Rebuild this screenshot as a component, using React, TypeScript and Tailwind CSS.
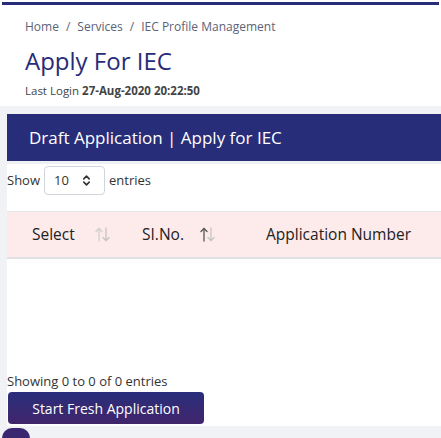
import { ChevronsUpDown } from "lucide-react";

function SortIcon({ active }: { active?: boolean }) {
  return (
    <svg width="15" height="15" viewBox="0 0 15 15" fill="none" strokeWidth="1.3" strokeLinecap="round" strokeLinejoin="round">
      <g stroke={active ? "#555" : "#d0d0d0"}>
        <path d="M4 14V1.5" />
        <path d="M1 4.5L4 1.5L7 4.5" />
      </g>
      <g stroke="#c4c4c4">
        <path d="M11 1V13.5" />
        <path d="M8 10.5L11 13.5L14 10.5" />
      </g>
    </svg>
  );
}

export default function App() {
  return (
    <div className="w-[441px] h-[438px] overflow-hidden bg-white font-['Open_Sans',sans-serif] relative">
      <div className="mx-[2px] mt-[2px] h-[3px] bg-[#272c78]" />

      <div className="px-[25px] pt-[13px]">
        <div className="text-[12px] text-[#5b6275] flex gap-[7px]">
          <span>Home</span>
          <span>/</span>
          <span>Services</span>
          <span>/</span>
          <span>IEC Profile Management</span>
        </div>
        <h1 className="mt-[10px] text-[24px] leading-[30px] text-[#282c78]">Apply For IEC</h1>
        <div className="mt-[6px] text-[11.5px] text-[#444]">
          Last Login <span className="font-bold">27-Aug-2020 20:22:50</span>
        </div>
      </div>

      <div className="mt-[7px] bg-[#f1f2f6] pl-[7px] pt-[8px] h-[340px]">
        <div className="bg-white">
          <div className="h-[47px] bg-[#282d7a] flex items-center pl-[22px] text-white text-[17px]">
            Draft Application | Apply for IEC
          </div>
          <div className="h-[3px] bg-[#eef0f4]" />
          <div className="flex items-center h-[32px] text-[13px] text-[#333]">
            <span>Show</span>
            <div className="ml-[4px] w-[61px] h-[29px] border border-gray-300 rounded-[4px] flex items-center justify-between pl-[9px] pr-[11px]">
              <span>10</span>
              <ChevronsUpDown size={13} strokeWidth={3} className="text-[#333]" />
            </div>
            <span className="ml-[4px]">entries</span>
          </div>
          <div className="mt-[15px] h-[48px] bg-[#fdeaea] border-t border-gray-200 border-b-2 border-b-[#dfe1e6] flex items-center text-[15.5px] font-medium text-[#222]">
            <div className="w-[110px] pl-[25px] flex items-center gap-[20px]">
              <span>Select</span>
              <SortIcon />
            </div>
            <div className="w-[124px] pl-[25px] flex items-center gap-[16px]">
              <span>SI.No.</span>
              <SortIcon active />
            </div>
            <div className="pl-[25px]">Application Number</div>
          </div>
          <div className="h-[113px]" />
          <div className="text-[13px] text-[#333] leading-[18px]">Showing 0 to 0 of 0 entries</div>
          <div className="pt-[2px] pb-[2px]">
            <button className="ml-[1px] w-[196px] h-[32px] rounded-[4px] bg-gradient-to-b from-[#282d7a] to-[#40256c] text-white text-[14px]">
              Start Fresh Application
            </button>
          </div>
        </div>
      </div>
      <div className="absolute left-[2px] top-[428px] w-[28px] h-[20px] rounded-t-[10px] bg-[#3a2770]" />
    </div>
  );
}
